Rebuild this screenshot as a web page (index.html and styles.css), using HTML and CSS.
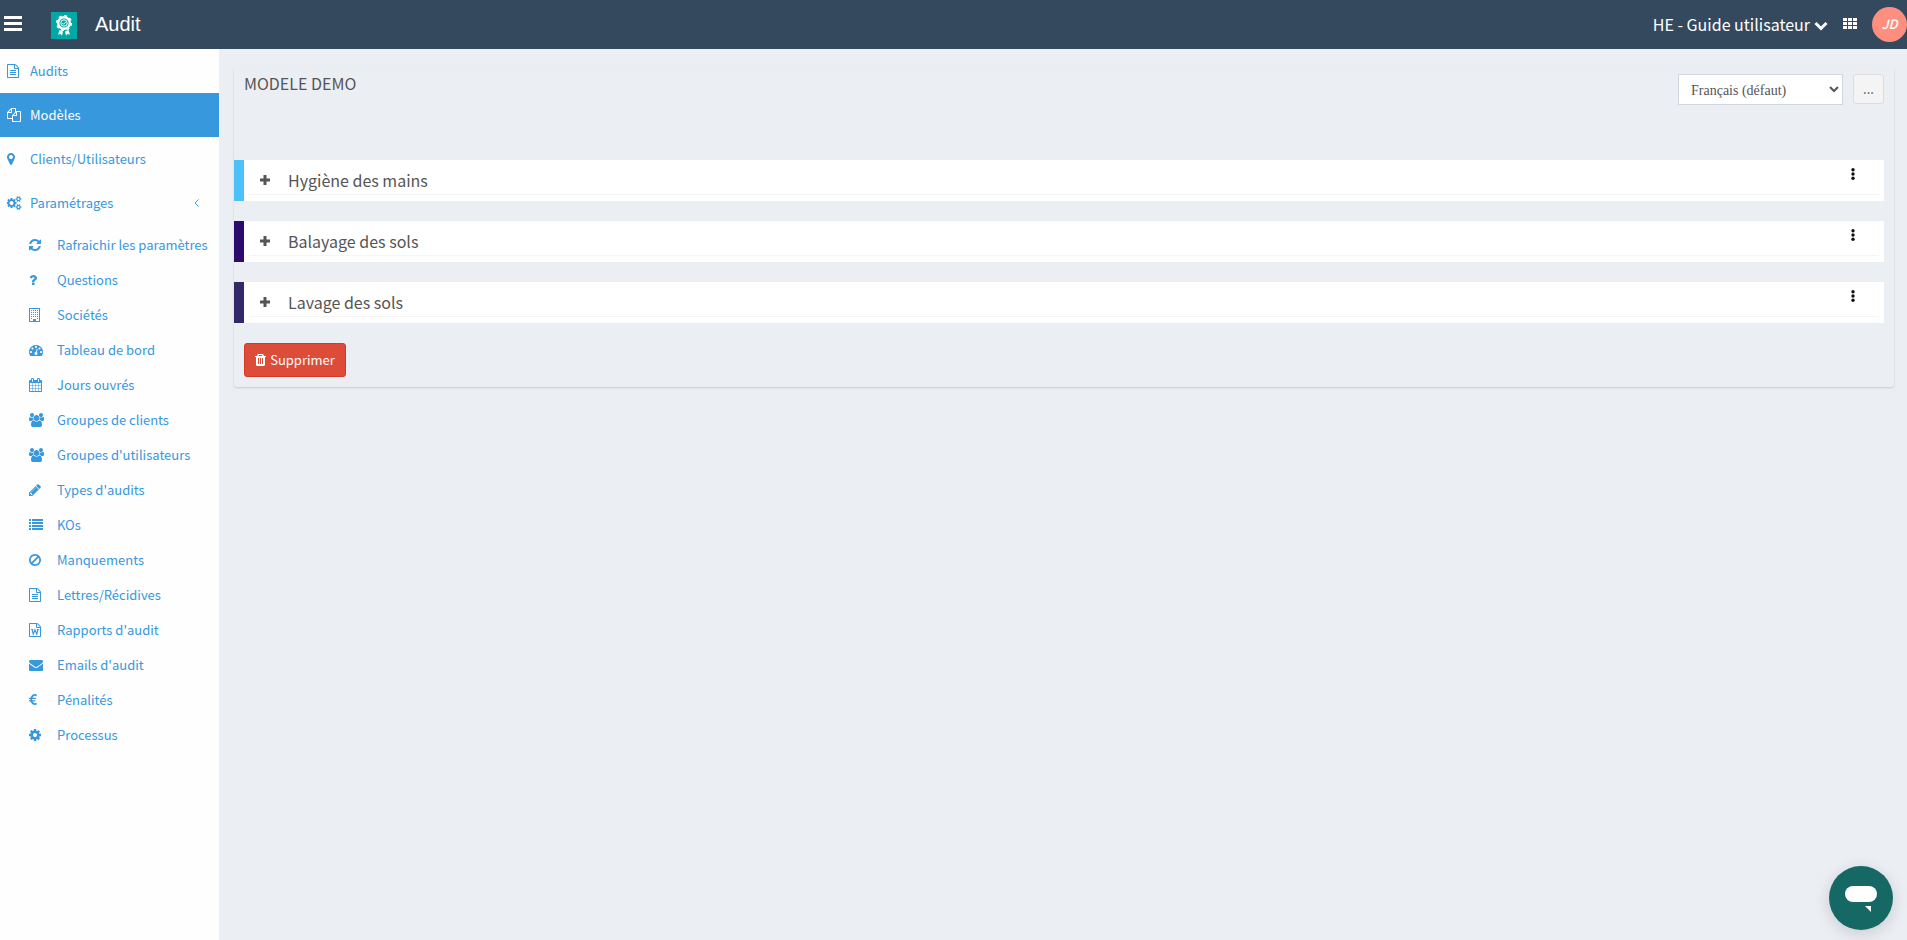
FILE: index.html
```html
<!DOCTYPE html>
<html lang="fr">
<head>
    <meta charset="UTF-8">
    <meta name="viewport" content="width=device-width, initial-scale=1.0">
    <title>Audit</title>
    <link rel="stylesheet" href="styles.css">
</head>
<body>
    <header class="navbar">
        <button class="menu-toggle" type="button" aria-label="Menu">
            <svg width="18" height="15" viewBox="0 0 18 15"><path d="M0 0h18v3H0zM0 6h18v3H0zM0 12h18v3H0z"/></svg>
        </button>
        <svg class="logo" width="26" height="27" viewBox="0 0 26 27">
            <path fill="#00a9a5" d="M0 0h26v27H0z"/>
            <path fill="#fff" d="M8.500 18l3.500 1.500-1 4-1.500-1.500-2.500.5zM17.500 18L14 19.500l1 4 1.500-1.500 2.500.5z"/>
            <circle cx="13" cy="11" r="5.800" fill="none" stroke="#fff" stroke-width="2.400"/>
            <circle cx="13" cy="11" r="7.200" fill="none" stroke="#fff" stroke-width="1.800" stroke-dasharray="2.830"/>
            <circle cx="13" cy="11" r="3.200" fill="none" stroke="#fff"/>
            <path fill="none" stroke="#fff" d="M11.300 11l1.300 1.300 2.300-2.500"/>
        </svg>
        <span class="app-name">Audit</span>
        <button class="company" type="button">HE - Guide utilisateur
            <svg width="14" height="10" viewBox="0 0 14 10"><path fill="none" stroke="#fff" stroke-width="3" d="M1.500 2L7 7.500 12.500 2"/></svg>
        </button>
        <button class="apps" type="button" aria-label="Applications">
            <svg width="14" height="11" viewBox="0 0 14 11"><path d="M0 0h4v3H0zM5 0h4v3H5zM10 0h4v3h-4zM0 4h4v3H0zM5 4h4v3H5zM10 4h4v3h-4zM0 8h4v3H0zM5 8h4v3H5zM10 8h4v3h-4z"/></svg>
        </button>
        <a class="avatar" href="#">JD</a>
    </header>

    <div class="wrapper">
        <nav class="sidebar">
            <ul class="menu">
                <li><a href="#">
                    <svg class="icon" viewBox="128 0 1920 1792"><path d="M1596 380q28 28 48 76t20 88v1152q0 40-28 68t-68 28h-1344q-40 0-68-28t-28-68v-1600q0-40 28-68t68-28h896q40 0 88 20t76 48zm-444-244v376h376q-10-29-22-41l-313-313q-12-12-41-22zm384 1528v-1024h-416q-40 0-68-28t-28-68v-416h-768v1536h1280zm-1024-864q0-14 9-23t23-9h704q14 0 23 9t9 23v64q0 14-9 23t-23 9h-704q-14 0-23-9t-9-23v-64zm736 224q14 0 23 9t9 23v64q0 14-9 23t-23 9h-704q-14 0-23-9t-9-23v-64q0-14 9-23t23-9h704zm0 256q14 0 23 9t9 23v64q0 14-9 23t-23 9h-704q-14 0-23-9t-9-23v-64q0-14 9-23t23-9h704z"/></svg>
                    Audits</a></li>
                <li class="active"><a href="#">
                    <svg class="icon" viewBox="0 0 1920 1792"><path d="M1696 384q40 0 68 28t28 68v1216q0 40-28 68t-68 28h-960q-40 0-68-28t-28-68v-288h-544q-40 0-68-28t-28-68v-672q0-40 20-88t48-76l408-408q28-28 76-48t88-20h416q40 0 68 28t28 68v328q68-40 128-40h416zm-544 213l-299 299h299v-299zm-640-384l-299 299h299v-299zm196 647l316-316v-416h-384v416q0 40-28 68t-68 28h-416v640h512v-256q0-40 20-88t48-76zm956 804v-1152h-384v416q0 40-28 68t-68 28h-416v640h896z"/></svg>
                    Modèles</a></li>
                <li><a href="#">
                    <svg class="icon" viewBox="384 0 1920 1792"><path d="M1152 640q0-106-75-181t-181-75-181 75-75 181 75 181 181 75 181-75 75-181zm256 0q0 109-33 179l-364 774q-16 33-47.500 52t-67.500 19-67.500-19-46.500-52l-365-774q-33-70-33-179 0-212 150-362t362-150 362 150 150 362z"/></svg>
                    Clients/Utilisateurs</a></li>
                <li><a href="#">
                    <svg class="icon" viewBox="0 0 1920 1792"><path d="M832 896q0-106-75-181t-181-75-181 75-75 181 75 181 181 75 181-75 75-181zm768 512q0-52-38-90t-90-38-90 38-38 90q0 53 37.500 90.500t90.500 37.500 90.500-37.500 37.500-90.500zm0-1024q0-52-38-90t-90-38-90 38-38 90q0 53 37.500 90.500t90.500 37.500 90.500-37.500 37.500-90.500zm-384 421v185q0 10-7 19.500t-16 10.500l-155 24q-11 35-32 76 34 48 90 115 7 11 7 20 0 12-7 19-23 30-82.500 89.500t-78.500 59.500q-11 0-21-7l-115-90q-37 19-77 31-11 108-23 155-7 24-30 24h-186q-11 0-20-7.500t-10-17.500l-23-153q-34-10-75-31l-118 89q-7 7-20 7-11 0-21-8-144-133-144-160 0-9 7-19 10-14 41-53t47-61q-23-44-35-82l-152-24q-10-1-17-9.500t-7-19.500v-185q0-10 7-19.500t16-10.500l155-24q11-35 32-76-34-48-90-115-7-11-7-20 0-12 7-20 22-30 82-89t79-59q11 0 21 7l115 90q34-18 77-32 11-108 23-154 7-24 30-24h186q11 0 20 7.500t10 17.500l23 153q34 10 75 31l118-89q8-7 20-7 11 0 21 8 144 133 144 160 0 8-7 19-12 16-42 54t-45 60q23 48 34 82l152 23q10 2 17 10.500t7 19.500zm640 533v140q0 16-149 31-12 27-30 52 51 113 51 138 0 4-4 7-122 71-124 71-8 0-46-47t-52-68q-20 2-30 2t-30-2q-14 21-52 68t-46 47q-2 0-124-71-4-3-4-7 0-25 51-138-18-25-30-52-149-15-149-31v-140q0-16 149-31 13-29 30-52-51-113-51-138 0-4 4-7 4-2 35-20t59-34 30-16q8 0 46 46.500t52 67.500q20-2 30-2t30 2q51-71 92-112l6-2q4 0 124 70 4 3 4 7 0 25-51 138 17 23 30 52 149 15 149 31zm0-1024v140q0 16-149 31-12 27-30 52 51 113 51 138 0 4-4 7-122 71-124 71-8 0-46-47t-52-68q-20 2-30 2t-30-2q-14 21-52 68t-46 47q-2 0-124-71-4-3-4-7 0-25 51-138-18-25-30-52-149-15-149-31v-140q0-16 149-31 13-29 30-52-51-113-51-138 0-4 4-7 4-2 35-20t59-34 30-16q8 0 46 46.500t52 67.500q20-2 30-2t30 2q51-71 92-112l6-2q4 0 124 70 4 3 4 7 0 25-51 138 17 23 30 52 149 15 149 31z"/></svg>
                    Paramétrages
                    <svg class="angle" width="5" height="8" viewBox="0 0 5 8"><path d="M4.500 .5L1 4l3.500 3.500"/></svg></a>
                    <ul class="submenu">
                        <li><a href="#">
                            <svg class="icon" viewBox="128 0 1920 1792"><path d="M1639 1056q0 5-1 7-64 268-268 434.500t-478 166.500q-146 0-282.500-55t-243.500-157l-129 129q-19 19-45 19t-45-19-19-45v-448q0-26 19-45t45-19h448q26 0 45 19t19 45-19 45l-137 137q71 66 161 102t187 36q134 0 250-65t186-179q11-17 53-117 8-23 30-23h192q13 0 22.500 9.500t9.500 22.500zm25-800v448q0 26-19 45t-45 19h-448q-26 0-45-19t-19-45 19-45l138-138q-148-137-349-137-134 0-250 65t-186 179q-11 17-53 117-8 23-30 23h-199q-13 0-22.500-9.500t-9.500-22.500v-7q65-268 270-434.500t480-166.500q146 0 284 55.500t245 156.500l130-129q19-19 45-19t45 19 19 45z"/></svg>
                            Rafraichir les paramètres</a></li>
                        <li><a href="#">
                            <svg class="icon" viewBox="384 0 1920 1792"><path d="M1088 1256v240q0 16-12 28t-28 12h-240q-16 0-28-12t-12-28v-240q0-16 12-28t28-12h240q16 0 28 12t12 28zm316-600q0 54-15.500 101t-35 76.500-55 59.500-57.500 43.500-61 35.500q-41 23-68.500 65t-27.500 67q0 17-12 32.500t-28 15.500h-240q-15 0-25.500-18.500t-10.500-37.500v-45q0-83 65-156.500t143-108.500q59-27 84-56t25-76q0-42-46.500-74t-107.500-32q-65 0-108 29-35 25-107 115-13 16-31 16-12 0-25-8l-164-125q-13-10-15.500-25t5.500-28q160-266 464-266 80 0 161 31t146 83 106 127.500 41 158.500z"/></svg>
                            Questions</a></li>
                        <li><a href="#">
                            <svg class="icon" viewBox="0 0 15 14"><path fill-rule="evenodd" d="M0 0h11v14H0zM1 1v12h3v-2h3v2h3V1z"/><path d="M2 2h1v1H2zM4 2h1v1H4zM6 2h1v1H6zM8 2h1v1H8zM2 4h1v1H2zM4 4h1v1H4zM6 4h1v1H6zM8 4h1v1H8zM2 6h1v1H2zM4 6h1v1H4zM6 6h1v1H6zM8 6h1v1H8zM2 8h1v1H2zM4 8h1v1H4zM6 8h1v1H6zM8 8h1v1H8zM2 10h1v1H2zM8 10h1v1H8z"/></svg>
                            Sociétés</a></li>
                        <li><a href="#">
                            <svg class="icon" viewBox="0 0 1920 1792"><path d="M384 1152q0-53-37.500-90.500t-90.500-37.500-90.500 37.500-37.500 90.500 37.500 90.500 90.500 37.500 90.500-37.500 37.500-90.500zm192-448q0-53-37.500-90.500t-90.500-37.500-90.500 37.500-37.500 90.500 37.500 90.500 90.500 37.500 90.500-37.500 37.500-90.500zm428 481l101-382q6-26-7.500-48.500t-38.500-29.500-48 6.500-30 39.500l-101 382q-60 5-107 43.500t-63 98.500q-20 77 20 146t117 89 146-20 89-117q16-60-6-117t-72-91zm660-33q0-53-37.500-90.500t-90.500-37.500-90.500 37.500-37.500 90.500 37.500 90.500 90.500 37.500 90.500-37.500 37.500-90.500zm-640-640q0-53-37.500-90.500t-90.500-37.500-90.500 37.500-37.500 90.500 37.500 90.500 90.500 37.500 90.500-37.500 37.500-90.500zm448 192q0-53-37.500-90.500t-90.500-37.500-90.500 37.500-37.500 90.500 37.500 90.500 90.500 37.500 90.500-37.500 37.500-90.500zm320 448q0 261-141 483-19 29-54 29h-1402q-35 0-54-29-141-221-141-483 0-182 71-348t191-286 286-191 348-71 348 71 286 191 191 286 71 348z"/></svg>
                            Tableau de bord</a></li>
                        <li><a href="#">
                            <svg class="icon" viewBox="64 0 1920 1792"><path d="M192 1664h288v-288h-288v288zm352 0h320v-288h-320v288zm-352-352h288v-320h-288v320zm352 0h320v-320h-320v320zm-352-384h288v-288h-288v288zm736 736h320v-288h-320v288zm-384-736h320v-288h-320v288zm768 736h288v-288h-288v288zm-384-352h320v-320h-320v320zm-352-864v-288q0-13-9.500-22.500t-22.500-9.500h-64q-13 0-22.500 9.500t-9.500 22.500v288q0 13 9.500 22.500t22.500 9.500h64q13 0 22.500-9.500t9.500-22.500zm736 864h288v-320h-288v320zm-384-384h320v-288h-320v288zm384 0h288v-288h-288v288zm32-480v-288q0-13-9.500-22.500t-22.500-9.500h-64q-13 0-22.500 9.500t-9.500 22.500v288q0 13 9.500 22.500t22.500 9.500h64q13 0 22.500-9.500t9.500-22.500zm384-64v1280q0 52-38 90t-90 38h-1408q-52 0-90-38t-38-90v-1280q0-52 38-90t90-38h128v-96q0-66 47-113t113-47h64q66 0 113 47t47 113v96h384v-96q0-66 47-113t113-47h64q66 0 113 47t47 113v96h128q52 0 90 38t38 90z"/></svg>
                            Jours ouvrés</a></li>
                        <li><a href="#">
                            <svg class="icon" viewBox="0 0 1920 1792"><path id="group" d="M593 896q-162 5-265 128h-134q-82 0-138-40.500t-56-118.500q0-353 124-353 6 0 43.500 21t97.500 42.500 119 21.500q67 0 133-23-5 37-5 66 0 159 93 293zm1071 637q0 120-73 189.500t-194 69.500h-874q-121 0-194-69.500t-73-189.500q0-53 3.500-103.500t14-109 26.500-108.500 43-97.500 62-81 85.500-53.500 111.500-20q10 0 43 21.500t73 48 107 48 135 21.500 135-21.500 107-48 73-48 43-21.500q61 0 111.500 20t85.500 53.500 62 81 43 97.500 26.500 108.500 14 109 3.500 103.500zm-1024-1277q0 106-75 181t-181 75-181-75-75-181 75-181 181-75 181 75 75 181zm704 384q0 159-112.500 271.500t-271.500 112.500-271.500-112.500-112.500-271.500 112.500-271.500 271.500-112.500 271.500 112.500 112.500 271.500zm576 225q0 78-56 118.500t-138 40.500h-134q-103-123-265-128 93-134 93-293 0-29-5-66 66 23 133 23 59 0 119-21.500t97.500-42.500 43.500-21q124 0 124 353zm-128-609q0 106-75 181t-181 75-181-75-75-181 75-181 181-75 181 75 75 181z"/></svg>
                            Groupes de clients</a></li>
                        <li><a href="#">
                            <svg class="icon" viewBox="0 0 1920 1792"><use href="#group"/></svg>
                            Groupes d'utilisateurs</a></li>
                        <li><a href="#">
                            <svg class="icon" viewBox="128 0 1920 1792"><path d="M491 1536l91-91-235-235-91 91v107h128v128h107zm523-928q0-22-22-22-10 0-17 7l-542 542q-7 7-7 17 0 22 22 22 10 0 17-7l542-542q7-7 7-17zm-54-192l416 416-832 832h-416v-416zm683 96q0 53-37 90l-166 166-416-416 166-165q36-38 90-38 53 0 91 38l235 234q37 39 37 91z"/></svg>
                            Types d'audits</a></li>
                        <li><a href="#">
                            <svg class="icon" viewBox="0 0 15 14"><path d="M0 1h2v2H0zM3 1h11v2H3zM0 4h2v2H0zM3 4h11v2H3zM0 7h2v2H0zM3 7h11v2H3zM0 10h2v2H0zM3 10h11v2H3z"/></svg>
                            KOs</a></li>
                        <li><a href="#">
                            <svg class="icon" viewBox="128 0 1920 1792"><path d="M1440 893q0-161-87-295l-754 753q137 89 297 89 111 0 211.500-43.500t173.500-116.500 116-174.500 43-212.500zm-999 299l755-754q-135-91-300-91-148 0-273 73t-198 199-73 274q0 162 89 299zm1223-299q0 157-61 300t-163.500 246-245 164-298.500 61-298.500-61-245-164-163.500-246-61-300 61-299.500 163.500-245.500 245-164 298.500-61 298.500 61 245 164 163.500 245.500 61 299.500z"/></svg>
                            Manquements</a></li>
                        <li><a href="#">
                            <svg class="icon" viewBox="128 0 1920 1792"><path d="M1596 380q28 28 48 76t20 88v1152q0 40-28 68t-68 28h-1344q-40 0-68-28t-28-68v-1600q0-40 28-68t68-28h896q40 0 88 20t76 48zm-444-244v376h376q-10-29-22-41l-313-313q-12-12-41-22zm384 1528v-1024h-416q-40 0-68-28t-28-68v-416h-768v1536h1280zm-1024-864q0-14 9-23t23-9h704q14 0 23 9t9 23v64q0 14-9 23t-23 9h-704q-14 0-23-9t-9-23v-64zm736 224q14 0 23 9t9 23v64q0 14-9 23t-23 9h-704q-14 0-23-9t-9-23v-64q0-14 9-23t23-9h704zm0 256q14 0 23 9t9 23v64q0 14-9 23t-23 9h-704q-14 0-23-9t-9-23v-64q0-14 9-23t23-9h704z"/></svg>
                            Lettres/Récidives</a></li>
                        <li><a href="#">
                            <svg class="icon" viewBox="128 0 1920 1792"><path d="M1596 380q28 28 48 76t20 88v1152q0 40-28 68t-68 28h-1344q-40 0-68-28t-28-68v-1600q0-40 28-68t68-28h896q40 0 88 20t76 48zm-444-244v376h376q-10-29-22-41l-313-313q-12-12-41-22zm384 1528v-1024h-416q-40 0-68-28t-28-68v-416h-768v1536h1280z"/><path fill="none" stroke="currentColor" stroke-width="150" d="M400 830h260M1130 830h260M530 850l140 580 225-560 225 560 150-580"/></svg>
                            Rapports d'audit</a></li>
                        <li><a href="#">
                            <svg class="icon" viewBox="0 0 1920 1792"><path d="M1792 710v794q0 66-47 113t-113 47h-1472q-66 0-113-47t-47-113v-794q44 49 101 87 362 246 497 345 57 42 92.500 65.500t94.500 48 110 24.500h2q51 0 110-24.500t94.500-48 92.500-65.500q170-123 498-345 57-39 100-87zm0-294q0 79-49 151t-122 123q-376 261-468 325-10 7-42.500 31t-54 38.500-52 32.500-57.500 27-50 9h-2q-23 0-50-9t-57.500-27-52-32.500-54-38.500-42.500-31q-91-64-262-182.500t-205-142.500q-62-42-117-115.500t-55-136.500q0-78 41.500-130t118.500-52h1472q65 0 112.500 47t47.500 113z"/></svg>
                            Emails d'audit</a></li>
                        <li><a href="#">
                            <svg class="icon" viewBox="0 0 15 14"><path fill="none" stroke="currentColor" stroke-width="1.900" d="M7.700 2.300C4.500 1 2.200 3.200 2.200 6.500S4.500 12 7.700 10.700"/><path d="M0 4.800h7l-.3 1.200H0zM0 7.200h6.500l-.3 1.200H0z"/></svg>
                            Pénalités</a></li>
                        <li><a href="#">
                            <svg class="icon" viewBox="128 0 1920 1792"><path d="M1152 896q0-106-75-181t-181-75-181 75-75 181 75 181 181 75 181-75 75-181zm512-109v222q0 12-8 23t-20 13l-185 28q-19 54-39 91 35 50 107 138 10 12 10 25t-9 23q-27 37-99 108t-94 71q-12 0-26-9l-138-108q-44 23-91 38-16 136-29 186-7 28-36 28h-222q-14 0-24.500-8.500t-11.500-21.500l-28-184q-49-16-90-37l-141 107q-10 9-25 9-14 0-25-11-126-114-165-168-7-10-7-23 0-12 8-23 15-21 51-66.500t54-70.500q-27-50-41-99l-183-27q-13-2-21-12.500t-8-23.500v-222q0-12 8-23t19-13l186-28q14-46 39-92-40-57-107-138-10-12-10-24 0-10 9-23 26-36 98.500-107.500t94.500-71.500q13 0 26 10l138 107q44-23 91-38 16-136 29-186 7-28 36-28h222q14 0 24.500 8.500t11.500 21.500l28 184q49 16 90 37l142-107q9-9 24-9 13 0 25 10 129 119 165 170 7 8 7 22 0 12-8 23-15 21-51 66.500t-54 70.500q26 50 41 98l183 28q13 2 21 12.500t8 23.500z"/></svg>
                            Processus</a></li>
                    </ul>
                </li>
            </ul>
        </nav>

        <main class="content">
            <div class="box">
                <div class="box-header">
                    <h1>MODELE DEMO</h1>
                    <select aria-label="Langue">
                        <option>Français (défaut)</option>
                    </select>
                    <button class="more" type="button">...</button>
                </div>

                <section class="theme sky">
                    <div class="theme-inner">
                        <button class="expand" type="button" aria-label="Ouvrir"><svg width="10" height="10" viewBox="0 0 10 10"><path d="M3.500 0h3v3.500H10v3H6.500V10h-3V6.500H0v-3h3.500z"/></svg></button>
                        <h2>Hygiène des mains</h2>
                        <button class="dots" type="button" aria-label="Actions"><svg width="4" height="12" viewBox="0 0 4 12"><circle cx="2" cy="1.700" r="1.700"/><circle cx="2" cy="6" r="1.700"/><circle cx="2" cy="10.300" r="1.700"/></svg></button>
                    </div>
                </section>
                <section class="theme violet">
                    <div class="theme-inner">
                        <button class="expand" type="button" aria-label="Ouvrir"><svg width="10" height="10" viewBox="0 0 10 10"><path d="M3.500 0h3v3.500H10v3H6.500V10h-3V6.500H0v-3h3.500z"/></svg></button>
                        <h2>Balayage des sols</h2>
                        <button class="dots" type="button" aria-label="Actions"><svg width="4" height="12" viewBox="0 0 4 12"><circle cx="2" cy="1.700" r="1.700"/><circle cx="2" cy="6" r="1.700"/><circle cx="2" cy="10.300" r="1.700"/></svg></button>
                    </div>
                </section>
                <section class="theme indigo">
                    <div class="theme-inner">
                        <button class="expand" type="button" aria-label="Ouvrir"><svg width="10" height="10" viewBox="0 0 10 10"><path d="M3.500 0h3v3.500H10v3H6.500V10h-3V6.500H0v-3h3.500z"/></svg></button>
                        <h2>Lavage des sols</h2>
                        <button class="dots" type="button" aria-label="Actions"><svg width="4" height="12" viewBox="0 0 4 12"><circle cx="2" cy="1.700" r="1.700"/><circle cx="2" cy="6" r="1.700"/><circle cx="2" cy="10.300" r="1.700"/></svg></button>
                    </div>
                </section>

                <button class="delete" type="button">
                    <svg width="11" height="12" viewBox="0 0 11 12"><path fill-rule="evenodd" d="M3 0h5l1 2h2v1h-1v8l-1 1H2l-1-1V3H0V2h2zM4 1L3.500 2h4L7 1zM3 4v6h1V4zM5 4v6h1V4zM7 4v6h1V4z"/></svg>
                    Supprimer</button>
            </div>
        </main>
    </div>

    <button class="chat" type="button" aria-label="Chat">
        <svg width="32" height="26" viewBox="0 0 32 26"><rect width="32" height="16" rx="8"/><path d="M20 20h6v6z"/></svg>
    </button>
</body>
</html>
```

FILE: styles.css
```css
* {
    box-sizing: border-box;
}
body {
    margin: 0;
    min-height: 100vh;
    display: flex;
    flex-direction: column;
    font-family: "Noto Sans CJK SC", "Open Sans", sans-serif;
    font-size: 13px;
    line-height: 20px;
    color: #555;
    background-color: #ebeff4;
}
button {
    font: inherit;
    color: inherit;
    background: none;
    border: none;
    padding: 0;
    cursor: pointer;
}
svg {
    fill: currentColor;
    flex: none;
}
a {
    color: #3798dd;
    text-decoration: none;
}
ul {
    list-style: none;
    margin: 0;
    padding: 0;
}

/* top bar */
.navbar {
    display: flex;
    align-items: center;
    height: 49px;
    padding: 0 0 2px 4px;
    background-color: #34495e;
    color: #fff;
}
.menu-toggle {
    display: flex;
}
.logo {
    margin: 4px 18px 0 29px;
}
.app-name {
    font-family: "Liberation Sans", Arial, sans-serif;
    font-size: 20px;
}
.company {
    display: flex;
    align-items: center;
    gap: 4px;
    margin-left: auto;
    font-size: 16px;
}
.company svg {
    margin-top: 4px;
}
.apps {
    display: flex;
    margin: 0 15px;
}
.avatar {
    width: 35px;
    height: 35px;
    margin-top: 2px;
    border-radius: 50%;
    background-color: #fe8f7e;
    color: #fff;
    font-style: italic;
    font-weight: 500;
    line-height: 33px;
    text-align: center;
}

/* side menu */
.wrapper {
    display: flex;
    flex: 1;
}
.sidebar {
    width: 219px;
    flex: none;
    background-color: #fefefe;
}
.menu a {
    display: flex;
    align-items: center;
    height: 44px;
    padding: 0 20px 0 7px;
    gap: 8px;
}
.icon {
    width: 15px;
    height: 14px;
}
.angle {
    margin-left: auto;
    fill: none;
    stroke: currentColor;
}
.active a {
    background-color: #3798dd;
    color: #fff;
}
.submenu {
    padding-top: 2px;
}
.menu .submenu a {
    height: 35px;
    padding: 0 0 0 29px;
    gap: 13px;
}

/* page */
.content {
    flex: 1;
    padding: 17px 13px 17px 15px;
}
.box {
    padding: 8px 10px 10px 0;
    border-radius: 3px;
    box-shadow: 0 1px 2px rgba(0, 0, 0, 0.15);
}
.box-header {
    display: flex;
    align-items: flex-start;
    gap: 10px;
    height: 86px;
    padding-left: 10px;
}
h1, h2 {
    margin: 0;
    font-size: 16px;
    font-weight: normal;
    line-height: 18px;
}
h1 {
    margin-right: auto;
}
select {
    width: 165px;
    height: 31px;
    padding: 2px 2px 0 8px;
    border: 1px solid #d2d6de;
    background-color: #fff;
    color: #555;
    font-family: "Liberation Serif", serif;
    font-size: 14px;
}
.more {
    width: 31px;
    height: 30px;
    border: 1px solid #ddd;
    border-radius: 3px;
    background-color: #f4f4f4;
}
.theme {
    margin-bottom: 20px;
    padding: 0 5px 6px;
    border-left: 10px solid;
    background-color: #fff;
}
.sky {
    border-color: #4dc1fc;
}
.violet {
    border-color: #2d0a6e;
}
.indigo {
    border-color: #32286a;
}
.theme-inner {
    display: flex;
    align-items: center;
    height: 35px;
    padding: 5px 24px 0 11px;
    border-bottom: 1px solid #f4f4f4;
}
.expand {
    display: flex;
    margin-right: 18px;
    color: #555;
}
.theme h2 {
    flex: 1;
}
.dots {
    display: flex;
    margin-bottom: 12px;
    color: #111;
}
.delete {
    display: flex;
    align-items: center;
    justify-content: center;
    gap: 4px;
    width: 102px;
    height: 34px;
    margin-left: 10px;
    border: 1px solid #d73925;
    border-radius: 3px;
    background-color: #dd4b39;
    color: #fff;
}

/* chat launcher */
.chat {
    position: fixed;
    right: 14px;
    bottom: 10px;
    width: 64px;
    height: 64px;
    padding-top: 6px;
    border-radius: 50%;
    background-color: #166865;
    box-shadow: 0 4px 16px rgba(0, 0, 0, 0.15);
    color: #fff;
}
```
